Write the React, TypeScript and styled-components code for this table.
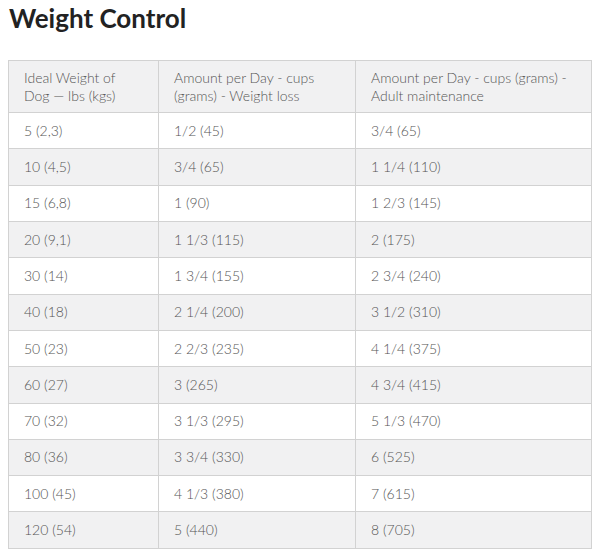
import React from "react";
import styled, { createGlobalStyle } from "styled-components";

const Global = createGlobalStyle`
  html, body { margin: 0; padding: 0; background: #ffffff; }
  body { font-family: Lato, "Open Sans", sans-serif; }
`;

const Page = styled.div`
  padding: 0 8px;
  display: flex;
  flex-direction: column;
`;

const Title = styled.h2`
  margin: 2px 0 0 1px;
  font-family: Lato, sans-serif;
  font-weight: 700;
  font-size: 26px;
  line-height: 32px;
  color: #222222;
  height: 58px;
`;

const Table = styled.table`
  width: 583px;
  border-collapse: collapse;
  table-layout: fixed;
  font-family: Lato, sans-serif;
  font-size: 14px;
  font-weight: 300;
  color: #555555;
  border: 1px solid #d2d2d2;
`;

const Col = styled.col<{ $w: number }>`
  width: ${(p) => p.$w}px;
`;

const Row = styled.tr<{ $shade: boolean }>`
  background: ${(p) => (p.$shade ? "#f1f1f2" : "#ffffff")};
`;

const HeadCell = styled.th`
  text-align: left;
  font-weight: 300;
  line-height: 18px;
  padding: 7.5px 15px;
  border: 1px solid #d2d2d2;
  vertical-align: top;
`;

const Cell = styled.td`
  line-height: 18px;
  padding: 8.66px 15px;
  border: 1px solid #d2d2d2;
`;

const rows: [string, string, string][] = [
  ["5 (2,3)", "1/2 (45)", "3/4 (65)"],
  ["10 (4,5)", "3/4 (65)", "1 1/4 (110)"],
  ["15 (6,8)", "1 (90)", "1 2/3 (145)"],
  ["20 (9,1)", "1 1/3 (115)", "2 (175)"],
  ["30 (14)", "1 3/4 (155)", "2 3/4 (240)"],
  ["40 (18)", "2 1/4 (200)", "3 1/2 (310)"],
  ["50 (23)", "2 2/3 (235)", "4 1/4 (375)"],
  ["60 (27)", "3 (265)", "4 3/4 (415)"],
  ["70 (32)", "3 1/3 (295)", "5 1/3 (470)"],
  ["80 (36)", "3 3/4 (330)", "6 (525)"],
  ["100 (45)", "4 1/3 (380)", "7 (615)"],
  ["120 (54)", "5 (440)", "8 (705)"],
];

export default function App() {
  return (
    <Page>
      <Global />
      <Title>Weight Control</Title>
      <Table>
        <colgroup>
          <Col $w={150} />
          <Col $w={197} />
          <Col $w={236} />
        </colgroup>
        <thead>
          <Row $shade>
            <HeadCell>Ideal Weight of Dog — lbs (kgs)</HeadCell>
            <HeadCell>Amount per Day - cups (grams) - Weight loss</HeadCell>
            <HeadCell>Amount per Day - cups (grams) - Adult maintenance</HeadCell>
          </Row>
        </thead>
        <tbody>
          {rows.map((r, i) => (
            <Row key={r[0]} $shade={i % 2 === 1}>
              <Cell>{r[0]}</Cell>
              <Cell>{r[1]}</Cell>
              <Cell>{r[2]}</Cell>
            </Row>
          ))}
        </tbody>
      </Table>
    </Page>
  );
}
